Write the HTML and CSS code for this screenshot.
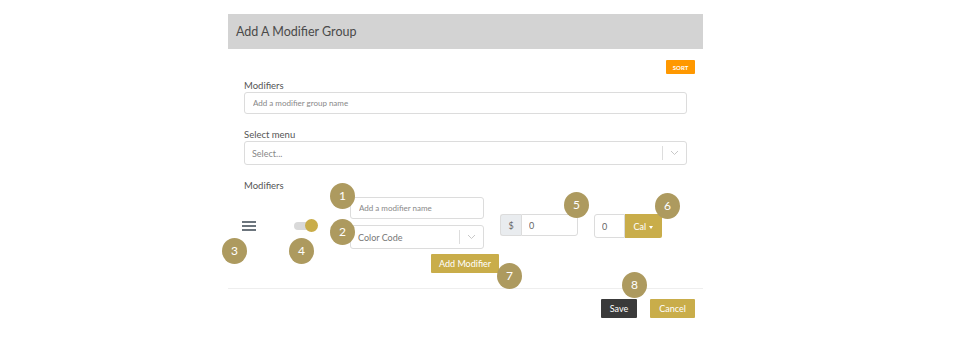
FILE: index.html
```html
<!DOCTYPE html>
<html lang="en">

<head>
    <meta charset="UTF-8">
    <title>Add A Modifier Group</title>
    <link rel="stylesheet" href="styles.css">
</head>

<body>

    <div class="card">
        <div class="card-header">Add A Modifier Group</div>

        <div class="card-body">
            <div class="sort-row">
                <button class="btn-sort">SORT</button>
            </div>

            <label class="field-label">Modifiers</label>
            <input type="text" class="text-input" placeholder="Add a modifier group name">

            <label class="field-label gap-top">Select menu</label>
            <div class="select-box">
                <span class="select-value">Select...</span>
                <span class="select-sep"></span>
                <span class="select-arrow">
                    <svg width="9" height="6" viewBox="0 0 9 6"><path d="M1 1l3.5 3.5L8 1" fill="none" stroke="#c8c8c8" stroke-width="1"/></svg>
                </span>
            </div>

            <label class="field-label gap-top">Modifiers</label>

            <div class="modifier-row">
                <div class="drag-handle">
                    <span></span><span></span><span></span>
                </div>

                <div class="toggle">
                    <span class="toggle-track"></span>
                    <span class="toggle-knob"></span>
                </div>

                <div class="modifier-fields">
                    <input type="text" class="text-input small" placeholder="Add a modifier name">
                    <div class="select-box color-select">
                        <span class="select-value dark">Color Code</span>
                        <span class="select-sep"></span>
                        <span class="select-arrow">
                            <svg width="9" height="6" viewBox="0 0 9 6"><path d="M1 1l3.5 3.5L8 1" fill="none" stroke="#c8c8c8" stroke-width="1"/></svg>
                        </span>
                    </div>
                </div>

                <div class="input-group price-group">
                    <span class="addon">$</span>
                    <input type="text" class="group-input" value="0">
                </div>

                <div class="input-group cal-group">
                    <input type="text" class="group-input" value="0">
                    <button class="btn-cal">Cal <span class="caret"></span></button>
                </div>
            </div>

            <div class="add-row">
                <button class="btn-gold">Add Modifier</button>
            </div>
        </div>

        <div class="card-footer">
            <button class="btn-dark">Save</button>
            <button class="btn-gold">Cancel</button>
        </div>

        <!-- numbered markers -->
        <span class="marker" style="left: 102px; top: 169px;">1</span>
        <span class="marker" style="left: 102px; top: 205px;">2</span>
        <span class="marker" style="left: -6px; top: 224px;">3</span>
        <span class="marker" style="left: 61px; top: 224px;">4</span>
        <span class="marker" style="left: 336px; top: 178px;">5</span>
        <span class="marker" style="left: 427px; top: 179px;">6</span>
        <span class="marker" style="left: 269px; top: 249px;">7</span>
        <span class="marker" style="left: 394px; top: 258px;">8</span>
    </div>

</body>

</html>
```

FILE: styles.css
```css
* {
    margin: 0;
    padding: 0;
    box-sizing: border-box;
}

body {
    margin: 0;
    background: #fff;
    font-family: 'Lato', 'Open Sans', sans-serif;
    color: #333;
}

.card {
    position: relative;
    width: 475px;
    margin: 14px 0 0 228px;
}

.card-header {
    height: 35px;
    line-height: 35px;
    padding-left: 8px;
    background: #d3d3d3;
    font-size: 12.5px;
    color: #4a4a4a;
}

.card-body {
    padding: 11px 16px 0;
}

.sort-row {
    display: flex;
    justify-content: flex-end;
    margin-right: -8px;
}

button {
    font-family: inherit;
    border: none;
    cursor: pointer;
}

.btn-sort {
    width: 29px;
    height: 14px;
    background: #ff9800;
    color: #fff;
    font-size: 6px;
    font-weight: bold;
    border-radius: 1px;
}

.field-label {
    display: block;
    margin-top: 6px;
    height: 12px;
    line-height: 12px;
    font-size: 9.5px;
    color: #555;
}

.field-label.gap-top {
    margin-top: 15px;
}

.text-input {
    display: block;
    width: 100%;
    height: 22px;
    padding: 0 8px;
    border: 1px solid #dcdcdc;
    border-radius: 3px;
    font-family: inherit;
    font-size: 8px;
    color: #333;
    outline: none;
}

.text-input::placeholder {
    color: #888;
}

.select-box {
    display: flex;
    align-items: center;
    height: 24px;
    border: 1px solid #dcdcdc;
    border-radius: 3px;
}

.select-value {
    flex: 1;
    padding-left: 7px;
    font-size: 9px;
    color: #888;
}

.select-value.dark {
    color: #777;
}

.select-sep {
    width: 1px;
    height: 14px;
    background: #ddd;
}

.select-arrow {
    width: 23px;
    display: flex;
    justify-content: center;
}

/* modifier line */
.modifier-row {
    display: flex;
    align-items: flex-start;
    margin-top: 5px;
}

.drag-handle {
    display: flex;
    flex-direction: column;
    gap: 2px;
    width: 14px;
    margin: 24px 0 0 -2px;
}

.drag-handle span {
    height: 2px;
    background: #6c757d;
}

.toggle {
    position: relative;
    width: 24px;
    height: 13px;
    margin: 22px 0 0 38px;
}

.toggle-track {
    position: absolute;
    left: 0;
    top: 3px;
    width: 18px;
    height: 8px;
    border-radius: 4px;
    background: #d9d9d9;
}

.toggle-knob {
    position: absolute;
    right: 0;
    top: 0;
    width: 13px;
    height: 13px;
    border-radius: 50%;
    background: #c9ad4a;
}

.modifier-fields {
    display: flex;
    flex-direction: column;
    gap: 6px;
    width: 134px;
    margin-left: 32px;
}

.text-input.small {
    height: 22px;
    font-size: 8px;
}

.color-select .select-value {
    font-size: 9px;
}

.input-group {
    display: flex;
    margin-top: 17px;
}

.price-group {
    width: 78px;
    height: 22px;
    margin-left: 16px;
}

.addon {
    width: 21px;
    display: flex;
    align-items: center;
    justify-content: center;
    background: #e9ecef;
    border: 1px solid #dcdcdc;
    border-right: none;
    border-radius: 3px 0 0 3px;
    font-size: 9px;
    color: #666;
}

.group-input {
    flex: 1;
    min-width: 0;
    padding-left: 7px;
    border: 1px solid #dcdcdc;
    border-radius: 0 3px 3px 0;
    font-family: inherit;
    font-size: 9px;
    color: #666;
    outline: none;
}

.cal-group {
    width: 68px;
    height: 24px;
    margin-left: 16px;
}

.cal-group .group-input {
    border-radius: 3px 0 0 3px;
    width: 31px;
    flex: none;
}

.btn-cal {
    flex: 1;
    background: #c9ad4a;
    color: #fff;
    font-size: 9px;
    border-radius: 0 2px 2px 0;
}

.caret {
    display: inline-block;
    vertical-align: middle;
    border-left: 2.5px solid transparent;
    border-right: 2.5px solid transparent;
    border-top: 3px solid #fff;
    margin-left: 1px;
}

.add-row {
    display: flex;
    margin: 5px 0 0 187px;
}

.btn-gold {
    height: 19px;
    padding: 0 8px;
    background: #c9ad4a;
    color: #fff;
    font-size: 9px;
    border-radius: 1px;
}

.btn-dark {
    height: 19px;
    padding: 0 8px;
    background: #3a3a3a;
    color: #fff;
    font-size: 9px;
    border-radius: 1px;
}

.card-footer {
    display: flex;
    justify-content: flex-end;
    gap: 13px;
    margin-top: 15px;
    padding: 10px 8px 0;
    border-top: 1px solid #eee;
}

.card-footer .btn-dark {
    width: 36px;
    padding: 0;
}

.card-footer .btn-gold {
    width: 45px;
    padding: 0;
}

.marker {
    position: absolute;
    width: 25px;
    height: 26px;
    border-radius: 50%;
    background: #ad9a5f;
    color: #fff;
    font-size: 12px;
    line-height: 26px;
    text-align: center;
}
```
